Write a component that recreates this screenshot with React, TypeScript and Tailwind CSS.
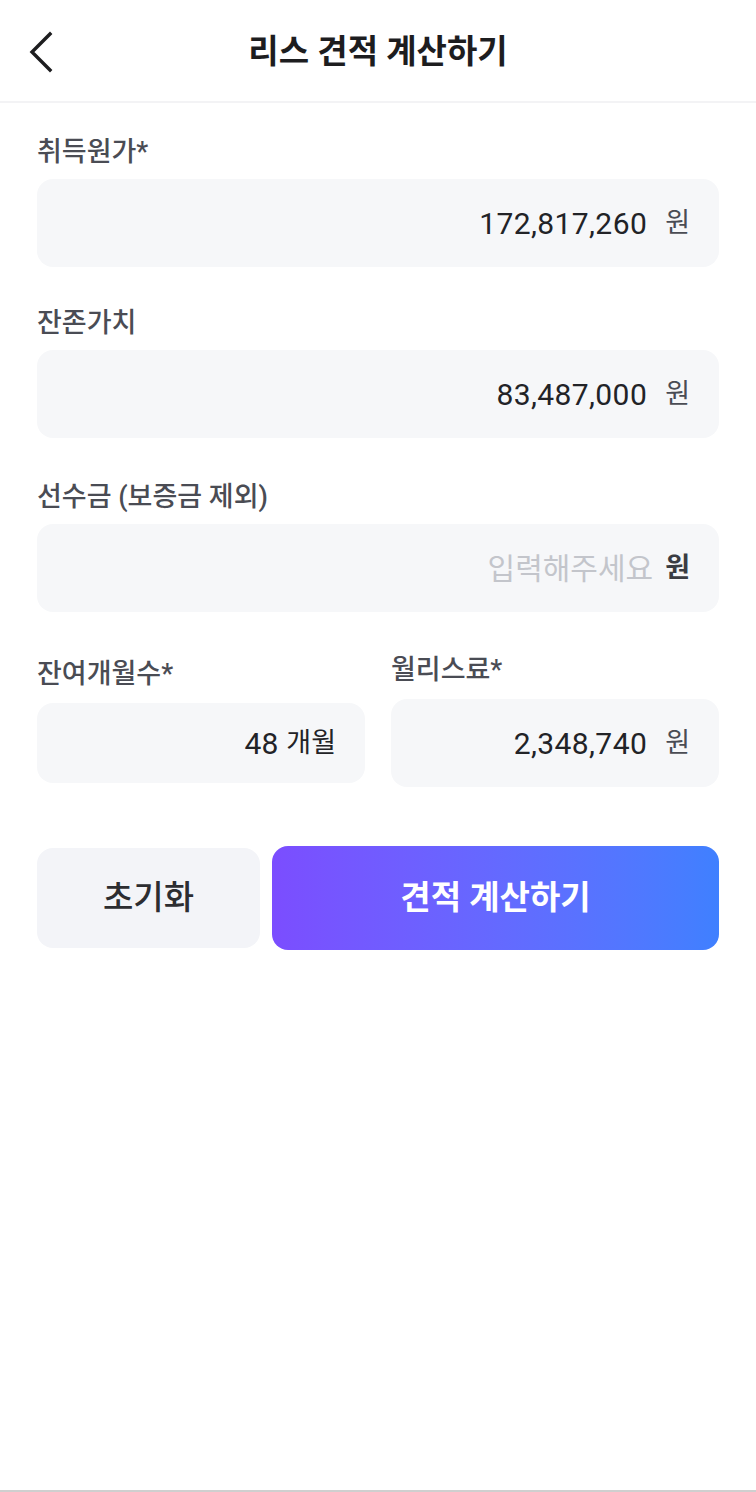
import React from 'react';

const font = { fontFamily: 'Roboto, "Noto Sans CJK KR", sans-serif' };

function Label({ children }: { children: React.ReactNode }) {
  return <div className="text-[27px] leading-[34px] font-medium text-[#4a4c54] mb-[10px]">{children}</div>;
}

function Field({ label, value, unit, placeholder }: { label: string; value?: string; unit: string; placeholder?: string }) {
  return (
    <div className="flex flex-col">
      <Label>{label}</Label>
      <div className="h-[88px] rounded-[16px] bg-[#f6f7f9] flex items-center justify-end pr-[29px]">
        {value ? (
          <>
            <span className="text-[30px] tracking-[0.4px] text-[#222327]">{value}</span>
            <span className="text-[27px] ml-[18px] text-[#4a4c54]">{unit}</span>
          </>
        ) : (
          <>
            <span className="text-[30px] text-[#c3c5cb]">{placeholder}</span>
            <span className="text-[27px] ml-[12px] font-semibold text-[#3a3c42]">{unit}</span>
          </>
        )}
      </div>
    </div>
  );
}

export default function App() {
  return (
    <div className="w-[756px] h-[1492px] bg-white flex flex-col relative" style={font}>
      <header className="h-[103px] border-b-2 border-[#f3f3f5] flex items-center justify-center relative">
        <button className="absolute left-[26px] top-[30px]">
          <svg width="32" height="44" viewBox="0 0 32 44" fill="none" stroke="#1d1d1f" strokeWidth="3.4" strokeLinecap="square">
            <path d="M24 4 L6 22 L24 40" />
          </svg>
        </button>
        <h1 className="text-[33px] font-bold text-[#1d1d1f] mt-[2px]">리스 견적 계산하기</h1>
      </header>

      <main className="px-[37px] pt-[32px] flex flex-col">
        <Field label="취득원가*" value="172,817,260" unit="원" />
        <div className="h-[39px]" />
        <Field label="잔존가치" value="83,487,000" unit="원" />
        <div className="h-[42px]" />
        <Field label="선수금 (보증금 제외)" unit="원" placeholder="입력해주세요" />

        <div className="flex gap-[26px] mt-[41px]">
          <div className="flex-1 flex flex-col pt-[4px]">
            <div className="text-[27px] leading-[34px] font-medium text-[#4a4c54] mb-[12px]">잔여개월수*</div>
            <div className="h-[80px] rounded-[16px] bg-[#f6f7f9] flex items-center justify-end pr-[29px]">
              <span className="text-[30px] text-[#222327]">48</span>
              <span className="text-[27px] text-[#222327] ml-[8px]">개월</span>
            </div>
          </div>
          <div className="flex-1 flex flex-col">
            <div className="text-[27px] leading-[34px] font-medium text-[#4a4c54] mb-[12px]">월리스료*</div>
            <div className="h-[88px] rounded-[16px] bg-[#f6f7f9] flex items-center justify-end pr-[29px]">
              <span className="text-[30px] tracking-[0.4px] text-[#222327]">2,348,740</span>
              <span className="text-[27px] text-[#4a4c54] ml-[18px]">원</span>
            </div>
          </div>
        </div>

        <div className="flex gap-[12px] mt-[59px] items-center">
          <button className="w-[223px] h-[100px] rounded-[16px] bg-[#f3f4f8] text-[33px] font-medium text-[#2c2d31]">초기화</button>
          <button className="flex-1 h-[104px] rounded-[16px] bg-gradient-to-r from-[#7b4dff] to-[#3f80ff] text-[33px] font-bold text-white">견적 계산하기</button>
        </div>
      </main>

      <div className="absolute bottom-0 left-0 right-0 h-[2px] bg-[#cfcfcf]" />
    </div>
  );
}
